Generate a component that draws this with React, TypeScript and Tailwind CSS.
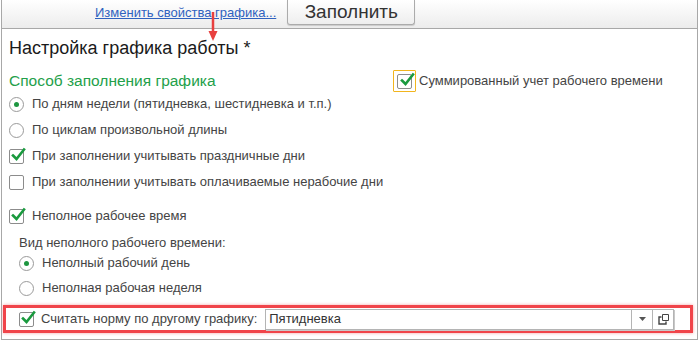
import React from "react";

const Check = ({ checked, focus }: { checked?: boolean; focus?: boolean }) => (
  <span
    className={
      "relative flex items-center justify-center shrink-0 " +
      (focus ? "w-[23px] h-[22px] border border-[#f2b51e] rounded-[1px]" : "w-[15px] h-[15px]")
    }
  >
    <span className="w-[15px] h-[15px] border border-[#8c8c8c] rounded-[2px] bg-white flex items-center justify-center">
      {checked && (
        <svg width="16" height="16" viewBox="0 0 16 16" className="absolute" style={{ left: focus ? 5 : 1, top: focus ? 1 : -2 }}>
          <path d="M3 8.5 L6.5 12 L14 2.5" fill="none" stroke="#1a9a3e" strokeWidth="2.6" strokeLinecap="square" />
        </svg>
      )}
    </span>
  </span>
);

const Radio = ({ on }: { on?: boolean }) => (
  <span className="w-[15px] h-[15px] rounded-full border border-[#9a9a9a] bg-white flex items-center justify-center shrink-0">
    {on && <span className="w-[5px] h-[5px] rounded-full bg-[#1e9640]" />}
  </span>
);

export default function App() {
  return (
    <div className="w-[700px] h-[341px] bg-white relative overflow-hidden" style={{ fontFamily: '"Liberation Sans", Arial, sans-serif' }}>
      <div className="ml-[1px] w-[697px] h-[340px] border-x border-b border-[#a8a8a8] flex flex-col">
        {/* top strip */}
        <div className="h-[29px] border-b border-[#a8a8a8] bg-gradient-to-b from-white to-[#ececec] flex items-start shrink-0">
          <a className="ml-[93px] mt-[5px] text-[13px] leading-[15px] text-[#2f62c0] underline decoration-[#2f62c0]">
            Изменить свойства графика...
          </a>
          <div className="ml-[11px] w-[128px] h-[25px] border border-t-0 border-[#ababab] rounded-b-[3px] bg-gradient-to-b from-white to-[#eeeeee] shadow-[0_1px_1px_rgba(0,0,0,0.15)] flex items-center justify-center text-[19px] leading-[22px] text-[#333] pb-[1px]">
            Заполнить
          </div>
        </div>

        <div className="pl-[7px] flex flex-col">
          <div className="mt-[9px] text-[18px] leading-[21px] text-[#1a1a1a]">Настройка графика работы *</div>
          <div className="flex">
            <div className="w-[384px] flex flex-col">
              <div className="mt-[13px] text-[15.5px] leading-[18px] text-[#23a04a]">Способ заполнения графика</div>
              <div className="mt-[1px] h-[26px] flex items-center gap-[8px] text-[13px] text-[#444]">
                <Radio on />
                <span>По дням недели (пятидневка, шестидневка и т.п.)</span>
              </div>
              <div className="h-[26px] flex items-center gap-[8px] text-[13px] text-[#444]">
                <Radio />
                <span>По циклам произвольной длины</span>
              </div>
              <div className="h-[26px] flex items-center gap-[8px] text-[13px] text-[#444]">
                <Check checked />
                <span>При заполнении учитывать праздничные дни</span>
              </div>
              <div className="h-[26px] flex items-center gap-[8px] text-[13px] text-[#444] whitespace-nowrap">
                <Check />
                <span>При заполнении учитывать оплачиваемые нерабочие дни</span>
              </div>
              <div className="mt-[8px] h-[26px] flex items-center gap-[8px] text-[13px] text-[#444]">
                <Check checked />
                <span>Неполное рабочее время</span>
              </div>
              <div className="ml-[10px] mt-[1px] h-[26px] flex items-center text-[13px] text-[#444]">
                Вид неполного рабочего времени:
              </div>
              <div className="ml-[10px] -mt-[6px] h-[26px] flex items-center gap-[8px] text-[13px] text-[#444]">
                <Radio on />
                <span>Неполный рабочий день</span>
              </div>
              <div className="ml-[10px] h-[24px] flex items-center gap-[8px] text-[13px] text-[#444]">
                <Radio />
                <span>Неполная рабочая неделя</span>
              </div>
            </div>
            <div className="pt-[11px] pl-[0px]">
              <div className="flex items-center gap-[3px] text-[13px] text-[#444]">
                <Check checked focus />
                <span>Суммированный учет рабочего времени</span>
              </div>
            </div>
          </div>
        </div>

        {/* highlighted row */}
        <div className="ml-[1px] mt-[5px] w-[690px] h-[28px] border-[3px] border-[#f0444a] shadow-[0_0_3px_rgba(240,68,74,0.5)] flex items-center">
          <div className="ml-[13px] flex items-center gap-[7px] text-[13px] text-[#444]">
            <Check checked />
            <span>Считать норму по другому графику:</span>
          </div>
          <div className="ml-[8px] w-[409px] h-[21px] border border-[#b4b4b4] shadow-[1px_1px_0_#c8c8c8] bg-white flex items-stretch">
            <div className="flex-1 pl-[3px] text-[13px] text-[#333] flex items-center">Пятидневка</div>
            <div className="w-[21px] border-l border-[#b4b4b4] flex items-center justify-center">
              <svg width="7" height="4" viewBox="0 0 7 4"><path d="M0 0 H7 L3.5 4 Z" fill="#555" /></svg>
            </div>
            <div className="w-[21px] border-l border-[#b4b4b4] flex items-center justify-center">
              <svg width="11" height="11" viewBox="0 0 11 11">
                <path d="M4.5 0.5 H10.5 V6.5 H4.5 Z" fill="none" stroke="#444" strokeWidth="1" />
                <path d="M3.5 3 H1 V10 H8 V7.5" fill="none" stroke="#444" strokeWidth="1.4" />
              </svg>
            </div>
          </div>
        </div>
      </div>

      {/* red arrow annotation */}
      <svg className="absolute left-[207px] top-[12px]" width="12" height="30" viewBox="0 0 12 30">
        <path d="M6 0 V20" stroke="#e8403f" strokeWidth="2.5" />
        <path d="M1.5 19 H10.5 L6 29 Z" fill="#e8403f" />
      </svg>
    </div>
  );
}
